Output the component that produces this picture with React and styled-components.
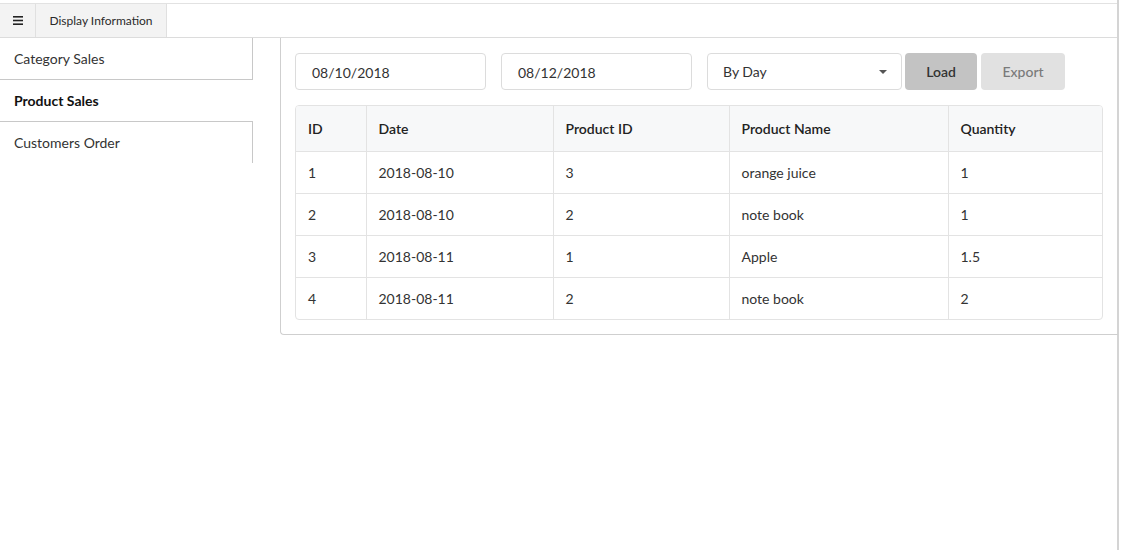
import styled, { createGlobalStyle } from "styled-components";

const GlobalStyle = createGlobalStyle`
    html, body {
        margin: 0;
        padding: 0;
        background: #fff;
    }
    body {
        font-family: Lato, "Liberation Sans", sans-serif;
        font-size: 14px;
        color: #333;
    }
`;

const rows = [
    { id: 1, date: "2018-08-10", productId: 3, name: "orange juice", qty: "1" },
    { id: 2, date: "2018-08-10", productId: 2, name: "note book", qty: "1" },
    { id: 3, date: "2018-08-11", productId: 1, name: "Apple", qty: "1.5" },
    { id: 4, date: "2018-08-11", productId: 2, name: "note book", qty: "2" },
];

const columns = [
    { key: "id", label: "ID", width: 70 },
    { key: "date", label: "Date", width: 187 },
    { key: "productId", label: "Product ID", width: 176 },
    { key: "name", label: "Product Name", width: 219 },
    { key: "qty", label: "Quantity", width: 154 },
];

const menuItems = ["Category Sales", "Product Sales", "Customers Order"];

const MenuIcon = () => (
    <svg width="10" height="9" viewBox="0 0 10 9" fill="#222">
        <rect x="0" y="0" width="10" height="1.6" />
        <rect x="0" y="3.7" width="10" height="1.6" />
        <rect x="0" y="7.4" width="10" height="1.6" />
    </svg>
);

const Caret = () => (
    <svg width="8" height="4" viewBox="0 0 8 4" fill="#555">
        <path d="M0 0 L8 0 L4 4 Z" />
    </svg>
);

const App = () => {
    const active = "Product Sales";
    return (
        <Page>
            <GlobalStyle />
            <TopBar>
                <MenuButton>
                    <MenuIcon />
                </MenuButton>
                <Tab>Display Information</Tab>
            </TopBar>
            <Body>
                <Sidebar>
                    {menuItems.map((item, i) => (
                        <SideItem
                            key={item}
                            $active={item === active}
                            $first={i === 0}
                        >
                            {item}
                        </SideItem>
                    ))}
                </Sidebar>
                <Panel>
                    <Toolbar>
                        <DateField>08/10/2018</DateField>
                        <DateField>08/12/2018</DateField>
                        <Select>
                            <span>By Day</span>
                            <Caret />
                        </Select>
                        <Button $variant="load">Load</Button>
                        <Button $variant="export">Export</Button>
                    </Toolbar>
                    <TableWrap>
                        <Table>
                            <colgroup>
                                {columns.map((c) => (
                                    <col key={c.key} style={{ width: c.width }} />
                                ))}
                            </colgroup>
                            <thead>
                                <tr>
                                    {columns.map((c) => (
                                        <Th key={c.key}>{c.label}</Th>
                                    ))}
                                </tr>
                            </thead>
                            <tbody>
                                {rows.map((r) => (
                                    <tr key={r.id}>
                                        {columns.map((c) => (
                                            <Td key={c.key}>{r[c.key]}</Td>
                                        ))}
                                    </tr>
                                ))}
                            </tbody>
                        </Table>
                    </TableWrap>
                </Panel>
            </Body>
        </Page>
    );
};

const Page = styled.div`
    width: 1119px;
    min-height: 550px;
    box-sizing: border-box;
    border-right: 2px solid #d4d4d4;
    padding-top: 3px;
`;

const TopBar = styled.div`
    display: flex;
    height: 35px;
    box-sizing: border-box;
    border-top: 1px solid #e2e2e2;
    border-bottom: 1px solid #dcdcdc;
    background: #fff;
`;

const MenuButton = styled.div`
    width: 35px;
    display: flex;
    align-items: center;
    justify-content: center;
    background: #f3f3f3;
    border-right: 1px solid #e0e0e0;
`;

const Tab = styled.div`
    width: 130px;
    display: flex;
    align-items: center;
    justify-content: center;
    background: #f3f3f3;
    border-right: 1px solid #e0e0e0;
    font-size: 12px;
    color: #2a2a2a;
`;

const Body = styled.div`
    display: flex;
    align-items: flex-start;
`;

const Sidebar = styled.div`
    width: 253px;
    flex-shrink: 0;
`;

const SideItem = styled.div`
    height: ${(p) => (p.$active ? "41px" : "42px")};
    box-sizing: border-box;
    display: flex;
    align-items: center;
    padding-left: 14px;
    font-size: 14px;
    color: ${(p) => (p.$active ? "#111" : "#333")};
    font-weight: ${(p) => (p.$active ? 700 : 400)};
    border-right: 1px solid ${(p) => (p.$active ? "transparent" : "#c8c8c8")};
    border-bottom: ${(p) => (p.$first ? "1px solid #c8c8c8" : "none")};
    border-top: ${(p) => (!p.$first && !p.$active ? "1px solid #c8c8c8" : "none")};
`;

const Panel = styled.div`
    flex: 1;
    margin-left: 27px;
    border: 1px solid #cfcfcf;
    border-top: none;
    border-right: none;
    border-bottom-left-radius: 4px;
    padding: 15px 15px 14px 14px;
`;

const Toolbar = styled.div`
    display: flex;
    align-items: center;
    height: 37px;
`;

const DateField = styled.div`
    width: 191px;
    height: 37px;
    box-sizing: border-box;
    border: 1px solid #dcdcdc;
    border-radius: 4px;
    display: flex;
    align-items: center;
    padding: 1px 0 0 16px;
    margin-right: 15px;
    font-size: 14px;
    color: #333;
`;

const Select = styled.div`
    width: 195px;
    height: 37px;
    box-sizing: border-box;
    border: 1px solid #dcdcdc;
    border-radius: 4px;
    display: flex;
    align-items: center;
    justify-content: space-between;
    padding: 0 14px 0 15px;
    margin-right: 3px;
    font-size: 14px;
    color: #333;
`;

const Button = styled.div`
    height: 37px;
    width: ${(p) => (p.$variant === "load" ? "72px" : "84px")};
    margin-right: 4px;
    border-radius: 4px;
    display: flex;
    align-items: center;
    justify-content: center;
    font-size: 14px;
    font-weight: ${(p) => (p.$variant === "load" ? 600 : 500)};
    background: ${(p) => (p.$variant === "load" ? "#c3c3c3" : "#e1e1e1")};
    color: ${(p) => (p.$variant === "load" ? "#333" : "#7a7a7a")};
`;

const TableWrap = styled.div`
    margin-top: 15px;
    border: 1px solid #e3e3e3;
    border-radius: 4px;
    overflow: hidden;
`;

const Table = styled.table`
    width: 100%;
    border-collapse: collapse;
    table-layout: fixed;
`;

const Th = styled.th`
    height: 45px;
    background: #f7f8f9;
    text-align: left;
    padding: 0 12px;
    font-weight: 600;
    font-size: 14px;
    color: #222;
    border-bottom: 1px solid #e3e3e3;
    border-left: 1px solid #e3e3e3;
    &:first-child {
        border-left: none;
    }
`;

const Td = styled.td`
    height: 41px;
    padding: 0 12px;
    font-size: 14px;
    color: #333;
    border-left: 1px solid #e3e3e3;
    border-top: 1px solid #e3e3e3;
    &:first-child {
        border-left: none;
    }
    tr:first-child > & {
        border-top: none;
    }
`;

export default App;
